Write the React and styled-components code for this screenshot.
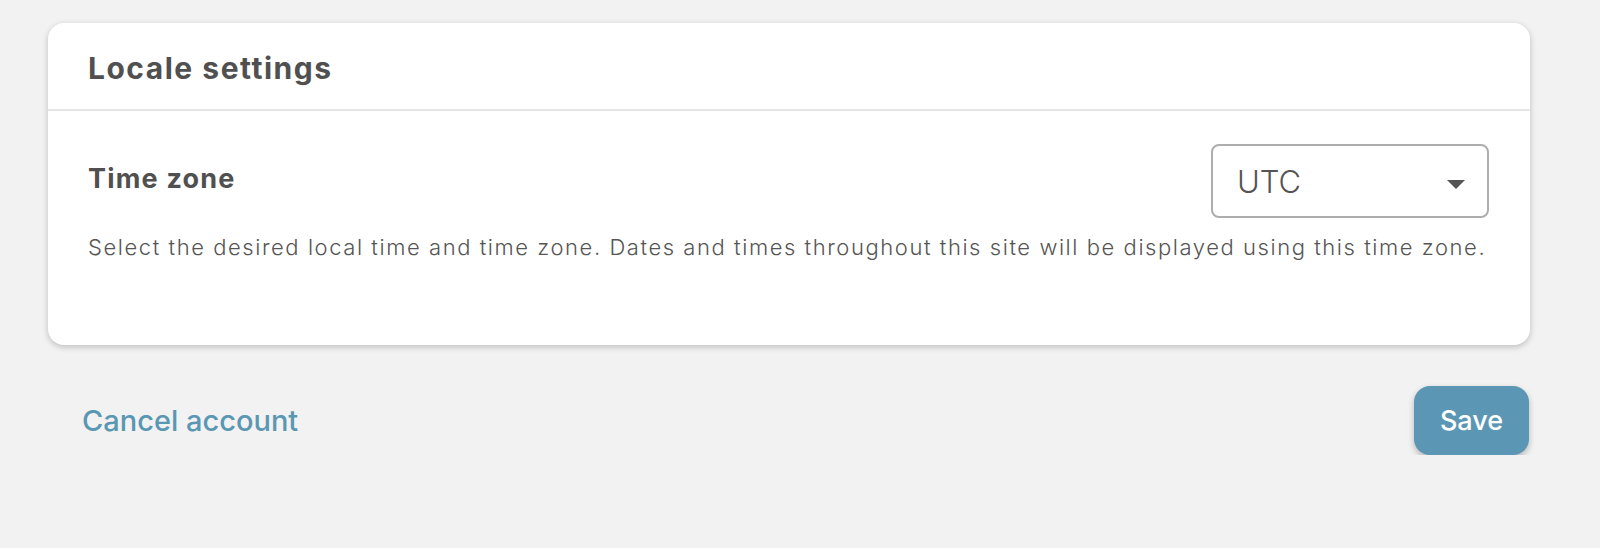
import styled, { createGlobalStyle } from 'styled-components';

const GlobalStyle = createGlobalStyle`
  html, body {
    margin: 0;
    padding: 0;
    background-color: #f2f2f2;
  }
  body {
    font-family: Inter, "Open Sans", "Liberation Sans", sans-serif;
    color: #505050;
  }
`;

function App() {
  return (
    <>
      <GlobalStyle />
      <Page>
        <Card>
          <CardHeader>
            <Title>Locale settings</Title>
          </CardHeader>
          <CardBody>
            <FieldRow>
              <Label>Time zone</Label>
              <Select>
                <SelectValue>UTC</SelectValue>
                <Caret viewBox="0 0 18 9" width="18" height="9">
                  <path d="M0 0 L18 0 L9 9 Z" fill="#555" />
                </Caret>
              </Select>
            </FieldRow>
            <Help>
              Select the desired local time and time zone. Dates and times throughout this site will be displayed using this time zone.
            </Help>
          </CardBody>
        </Card>

        <Footer>
          <CancelLink href="#">Cancel account</CancelLink>
          <SaveButton type="button">Save</SaveButton>
        </Footer>
      </Page>
    </>
  );
}

const Page = styled.div`
  padding: 23px 70px 0 48px;
  display: flex;
  flex-direction: column;
`;

const Card = styled.div`
  background-color: #fff;
  border-radius: 16px;
  box-shadow: 0 2px 6px rgba(0, 0, 0, 0.22);
  height: 322px;
  display: flex;
  flex-direction: column;
`;

const CardHeader = styled.div`
  box-sizing: border-box;
  height: 88px;
  padding: 4px 40px 0;
  display: flex;
  align-items: center;
  border-bottom: 2px solid #e5e5e5;
`;

const Title = styled.h2`
  margin: 0;
  font-size: 30px;
  font-weight: 700;
  color: #505050;
  letter-spacing: 1.5px;
`;

const CardBody = styled.div`
  padding: 33px 41px 0 40px;
`;

const FieldRow = styled.div`
  display: flex;
  justify-content: space-between;
  align-items: center;
`;

const Label = styled.div`
  font-size: 27px;
  font-weight: 700;
  color: #505050;
  letter-spacing: 1.2px;
  margin-top: -6px;
`;

const Select = styled.div`
  box-sizing: border-box;
  width: 278px;
  height: 74px;
  border: 2px solid #adadad;
  border-radius: 8px;
  padding: 0 22px 0 24px;
  display: flex;
  align-items: center;
  justify-content: space-between;
`;

const SelectValue = styled.span`
  font-size: 31px;
  font-weight: 300;
  color: #555;
`;

const Caret = styled.svg`
  display: block;
  margin-top: 6px;
`;

const Help = styled.p`
  margin: 13px -20px 0 0;
  font-size: 22px;
  font-weight: 300;
  line-height: 32px;
  letter-spacing: 1.56px;
  color: #555;
`;

const Footer = styled.div`
  display: flex;
  justify-content: space-between;
  align-items: center;
  padding: 41px 1px 0 34px;
`;

const CancelLink = styled.a`
  font-size: 29px;
  font-weight: 500;
  color: #5a97b3;
  text-decoration: none;
`;

const SaveButton = styled.button`
  width: 115px;
  height: 69px;
  border: none;
  border-radius: 16px;
  background-color: #5b97b4;
  color: #fff;
  font-family: inherit;
  font-size: 27px;
  font-weight: 500;
  box-shadow: 0 3px 6px rgba(0, 0, 0, 0.25);
  cursor: pointer;
`;

export default App;
